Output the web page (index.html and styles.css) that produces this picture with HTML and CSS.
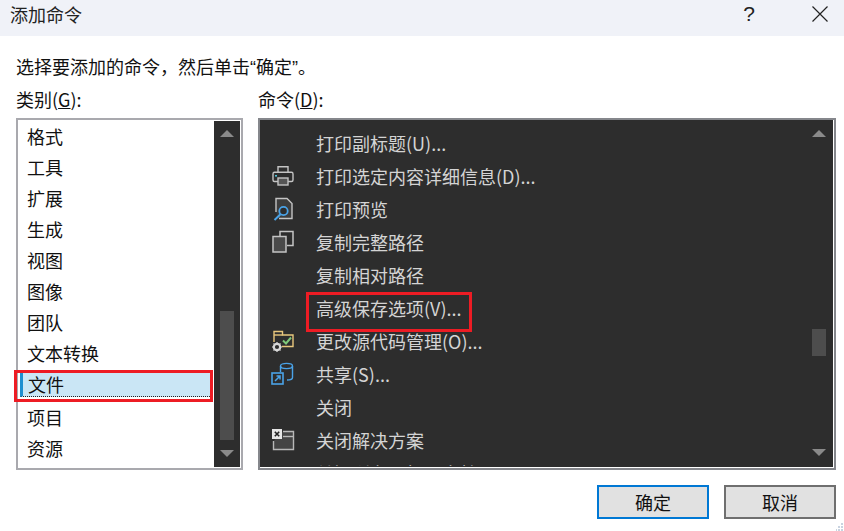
FILE: index.html
```html
<!doctype html>
<html lang="zh-CN">
  <head>
    <meta charset="UTF-8" />
    <title>添加命令</title>
    <link rel="stylesheet" href="styles.css">
  </head>
  <body>
    <div class="titlebar">
      <span class="title">添加命令</span>
      <span class="help">?</span>
      <svg class="close" width="16" height="16" viewBox="0 0 16 16"><path d="M0.5 0.5L15.5 15.5M15.5 0.5L0.5 15.5" stroke="#222" stroke-width="1.2" fill="none"/></svg>
    </div>

    <div class="content">
      <p class="prompt">选择要添加的命令，然后单击<span class="quote">“</span>确定<span class="quote">”</span>。</p>

      <div class="columns">
        <div class="col col-left">
          <div class="label">类别(<u>G</u>):</div>
          <div class="listbox">
            <ul class="categories">
              <li>格式</li>
              <li>工具</li>
              <li>扩展</li>
              <li>生成</li>
              <li>视图</li>
              <li>图像</li>
              <li>团队</li>
              <li>文本转换</li>
              <li class="selected"><span class="sel-fill">文件</span><span class="mark mark-category"></span></li>
              <li>项目</li>
              <li>资源</li>
            </ul>
            <div class="scrollbar">
              <span class="arrow-up"></span>
              <span class="thumb thumb-left"></span>
              <span class="arrow-down"></span>
            </div>
          </div>
        </div>

        <div class="col col-right">
          <div class="label">命令(<u>D</u>):</div>
          <div class="listbox">
            <ul class="commands">
              <li><span class="icon"></span>打印副标题(U)...</li>
              <li>
                <span class="icon">
                  <svg width="24" height="24" viewBox="0 0 24 24" fill="none" stroke="#c4c4c4" stroke-width="1.4">
                    <path d="M7 8V2.7H17V8"/>
                    <path d="M7 17.5H3.5C2.6 17.5 2 16.9 2 16V10C2 9 2.6 8.3 3.5 8.3H20.5C21.4 8.3 22 9 22 10V16C22 16.9 21.4 17.5 20.5 17.5H17"/>
                    <rect x="7" y="14" width="10" height="7" fill="#555"/>
                    <rect x="4" y="11" width="2" height="1.6" fill="#4fc3d9" stroke="none"/>
                  </svg>
                </span>
                打印选定内容详细信息(D)...
              </li>
              <li>
                <span class="icon">
                  <svg width="24" height="24" viewBox="0 0 24 24" fill="none">
                    <path d="M5 15V1.5H16L21 6.5V21.5H8" stroke="#c4c4c4" stroke-width="1.4" fill="#3d3d3d"/>
                    <circle cx="12.5" cy="14" r="4.2" stroke="#4aa3e8" stroke-width="1.8" fill="#2d2d2d"/>
                    <path d="M9.5 17.2L3.5 23" stroke="#4aa3e8" stroke-width="2"/>
                  </svg>
                </span>
                打印预览
              </li>
              <li>
                <span class="icon">
                  <svg width="24" height="24" viewBox="0 0 24 24" fill="none" stroke="#c4c4c4" stroke-width="1.5">
                    <path d="M9 6V1.5H22V15.5H16"/>
                    <rect x="2" y="6.5" width="13" height="15.5" fill="#4a4a4a"/>
                  </svg>
                </span>
                复制完整路径
              </li>
              <li><span class="icon"></span>复制相对路径</li>
              <li><span class="icon"></span>高级保存选项(V)...<span class="mark mark-command"></span></li>
              <li>
                <span class="icon">
                  <svg width="24" height="24" viewBox="0 0 24 24" fill="none">
                    <path d="M3 13V2.5H11.5V6H22V17.5H11" stroke="#e8c77d" stroke-width="1.4"/>
                    <path d="M3 6H11.5" stroke="#e8c77d" stroke-width="1.4"/>
                    <path d="M12 11.5L15 14.5L20 8.5" stroke="#7fc97a" stroke-width="2"/>
                    <circle cx="6" cy="18" r="3.2" stroke="#d8d8d8" stroke-width="2.2"/>
                    <path d="M6 13V23M1 18H11M2.5 14.5L9.5 21.5M9.5 14.5L2.5 21.5" stroke="#d8d8d8" stroke-width="1.2" stroke-dasharray="1.6 6.8"/>
                  </svg>
                </span>
                更改源代码管理(O)...
              </li>
              <li>
                <span class="icon">
                  <svg width="24" height="24" viewBox="0 0 24 24" fill="none">
                    <ellipse cx="15.5" cy="4" rx="6" ry="2.6" stroke="#4aa3e8" stroke-width="1.4"/>
                    <path d="M9.5 4V10M21.5 4V15.5C21.5 17 19 18 16 18" stroke="#4aa3e8" stroke-width="1.4"/>
                    <rect x="1" y="11" width="11" height="11" fill="#2d2d2d" stroke="#4aa3e8" stroke-width="1.6"/>
                    <path d="M4 19L9 14M5.5 14H9V17.5" stroke="#4aa3e8" stroke-width="1.5"/>
                  </svg>
                </span>
                共享(S)...
              </li>
              <li><span class="icon"></span>关闭</li>
              <li>
                <span class="icon">
                  <svg width="24" height="24" viewBox="0 0 24 24" fill="none">
                    <path d="M12 3.5H22.5V21.5H2.5V13" stroke="#b8b8b8" stroke-width="1.4" fill="#444"/>
                    <path d="M12 8.5H22.5" stroke="#b8b8b8" stroke-width="1.4"/>
                    <rect x="1" y="1" width="10" height="10" fill="#e6e6e6"/>
                    <path d="M3.8 3.8L8.2 8.2M8.2 3.8L3.8 8.2" stroke="#222" stroke-width="1.6"/>
                  </svg>
                </span>
                关闭解决方案
              </li>
              <li><span class="icon"></span>关闭所有已打开文档</li>
            </ul>
            <div class="scrollbar">
              <span class="arrow-up"></span>
              <span class="thumb thumb-right"></span>
              <span class="arrow-down"></span>
            </div>
          </div>
        </div>
      </div>

      <div class="buttons">
        <button class="btn btn-default">确定</button>
        <button class="btn">取消</button>
      </div>
    </div>

    <svg class="grip" width="8" height="8" viewBox="0 0 8 8" fill="#c9d3e0">
      <rect x="5" y="0" width="2" height="2"/>
      <rect x="5" y="3" width="2" height="2"/>
      <rect x="2" y="3" width="2" height="2"/>
      <rect x="5" y="6" width="2" height="2"/>
      <rect x="2" y="6" width="2" height="2"/>
      <rect x="-1" y="6" width="2" height="2"/>
    </svg>
  </body>
</html>
```

FILE: styles.css
```css
* {
  box-sizing: border-box;
}

html,
body {
  height: 100%;
}

body {
  margin: 0;
  overflow: hidden;
  background-color: #fff;
  color: #111;
  font-family: "Noto Sans CJK SC", "Noto Sans", sans-serif;
  font-size: 18px;
}

.titlebar {
  display: flex;
  align-items: center;
  height: 36px;
  padding: 0 16px 8px 10px;
  background-color: #f0f2f8;
  color: #222;
}

.title {
  flex: 1;
  line-height: 28px;
}

.help {
  margin-right: 57px;
  font-family: "Liberation Sans", sans-serif;
  font-size: 21px;
  line-height: 28px;
}

.prompt {
  margin: 0;
  padding-top: 16px;
  line-height: 28px;
}

.quote {
  font-family: "Liberation Sans", sans-serif;
}

.content {
  padding: 0 8px 0 16px;
}

.columns {
  display: flex;
  gap: 15px;
}

.col-left {
  width: 227px;
}

.col-right {
  width: 578px;
}

.label {
  height: 22px;
  margin-top: 6px;
  margin-bottom: 8px;
  line-height: 22px;
}

.listbox {
  display: flex;
  height: 352px;
  padding: 1px;
  border: 2px solid #a9a9ae;
  background-color: #fff;
}

.col-right .listbox {
  border-color: #85878c;
  background-color: #2d2d2d;
  box-shadow: inset -1px -1px 0 0 #fff;
  padding: 1px 2px 2px 1px;
}

.categories,
.commands {
  flex: 1;
  margin: 0;
  padding: 0;
  list-style: none;
}

.commands {
  overflow: hidden;
}

.categories li {
  position: relative;
  height: 31px;
  padding-left: 8px;
  line-height: 31px;
}

.categories .selected {
  padding: 0;
  height: 31px;
}

.sel-fill {
  display: block;
  height: 26px;
  margin: 2px 2px 3px 1px;
  padding-left: 5px;
  border: 1px dotted #222;
  border-left: 3px solid #1e8fd0;
  background-color: #cae6f5;
  line-height: 25px;
}

.mark {
  position: absolute;
  border: 3px solid #ed1c24;
}

.mark-category {
  top: -1px;
  left: -5px;
  width: 199px;
  height: 32px;
}

.commands {
  padding-top: 5px;
  color: #d4d4d4;
}

.commands li {
  position: relative;
  display: flex;
  align-items: center;
  height: 33px;
  padding-left: 10px;
  white-space: nowrap;
}

.icon {
  display: flex;
  flex: none;
  align-items: center;
  width: 45px;
  height: 24px;
}

.mark-command {
  top: 1px;
  left: 45px;
  width: 166px;
  height: 40px;
}

.scrollbar {
  display: flex;
  flex: none;
  flex-direction: column;
  align-items: center;
  width: 26px;
  padding-top: 9px;
  background-color: #2d2d2d;
}

.arrow-up,
.arrow-down {
  width: 0;
  height: 0;
  border-left: 7px solid transparent;
  border-right: 7px solid transparent;
}

.arrow-up {
  border-bottom: 7px solid #8a8a8a;
}

.arrow-down {
  margin-top: auto;
  margin-bottom: 10px;
  border-top: 7px solid #8a8a8a;
}

.thumb {
  display: block;
  width: 14px;
  background-color: #4d4d4d;
}

.thumb-left {
  height: 129px;
  margin-top: 174px;
}

.thumb-right {
  height: 27px;
  margin-top: 192px;
}

.buttons {
  display: flex;
  justify-content: flex-end;
  gap: 15px;
  margin-top: 15px;
}

.btn {
  width: 112px;
  height: 34px;
  padding: 0;
  border: 2px solid #6f6f6f;
  border-radius: 0;
  background-color: #e1e1e1;
  color: #111;
  font-family: inherit;
  font-size: 18px;
}

.btn-default {
  border-color: #0078d4;
}

.grip {
  position: absolute;
  right: 0;
  bottom: 0;
}
```
